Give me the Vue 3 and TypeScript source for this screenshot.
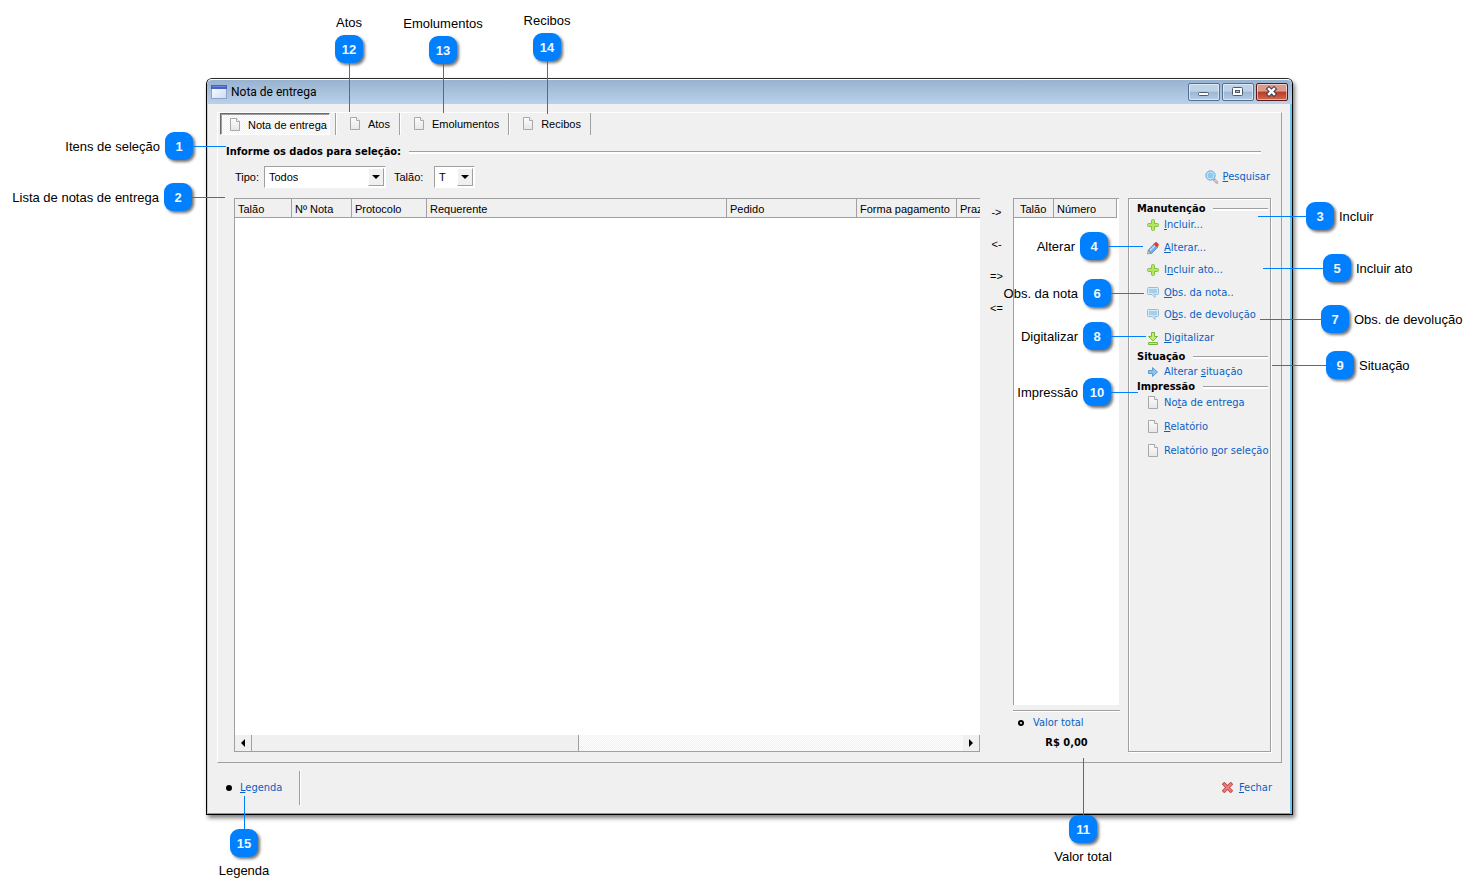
<script setup lang="ts">
import { computed, ref } from 'vue'

type Side = 'left' | 'right' | 'top' | 'bottom'

interface Callout {
  n: number
  label: string
  side: Side
  fromRight?: boolean
  x: number
  y: number
  reach: number
}

interface Action {
  icon: string
  pre: string
  key: string
  post: string
}

const tabs = ['Nota de entrega', 'Atos', 'Emolumentos', 'Recibos']
const activeTab = ref(0)

const tipo = ref('Todos')
const talao = ref('T')

const noteColumns = [
  { title: 'Talão', width: 57 },
  { title: 'Nº Nota', width: 60 },
  { title: 'Protocolo', width: 75 },
  { title: 'Requerente', width: 300 },
  { title: 'Pedido', width: 130 },
  { title: 'Forma pagamento', width: 100 },
  { title: 'Praz', width: 90 },
]

const moves = [
  { glyph: '->', title: 'Adicionar' },
  { glyph: '<-', title: 'Remover' },
  { glyph: '=>', title: 'Adicionar todos' },
  { glyph: '<=', title: 'Remover todos' },
]

const act = (icon: string, text: string): Action => {
  const i = text.indexOf('&')
  return { icon, pre: text.slice(0, i), key: text.slice(i + 1, i + 2), post: text.slice(i + 2) }
}

const groups = [
  {
    title: 'Manutenção',
    name: 'maintenance',
    actions: [
      act('plus', '&Incluir...'),
      act('pencil', '&Alterar...'),
      act('plus', 'I&ncluir ato...'),
      act('balloon', '&Obs. da nota..'),
      act('balloon', 'O&bs. de devolução'),
      act('download', '&Digitalizar'),
    ],
  },
  { title: 'Situação', name: 'status', actions: [act('arrow', 'Alterar &situação')] },
  {
    title: 'Impressão',
    name: 'print',
    actions: [act('page', 'No&ta de entrega'), act('page', '&Relatório'), act('page', 'Relatório &por seleção')],
  },
]

/* x and y are the tip of the leader line; x is measured from the right edge when fromRight is set */
const callouts: Callout[] = [
  { n: 1, label: 'Itens de seleção', side: 'left', x: 226, y: 146, reach: 33 },
  { n: 2, label: 'Lista de notas de entrega', side: 'left', x: 225, y: 197, reach: 33 },
  { n: 3, label: 'Incluir', side: 'right', fromRight: true, x: 219, y: 216, reach: 48 },
  { n: 4, label: 'Alterar', side: 'left', fromRight: true, x: 334, y: 246, reach: 35 },
  { n: 5, label: 'Incluir ato', side: 'right', fromRight: true, x: 214, y: 268, reach: 60 },
  { n: 6, label: 'Obs. da nota', side: 'left', fromRight: true, x: 333, y: 293, reach: 33 },
  { n: 7, label: 'Obs. de devolução', side: 'right', fromRight: true, x: 217, y: 319, reach: 61 },
  { n: 8, label: 'Digitalizar', side: 'left', fromRight: true, x: 331, y: 336, reach: 35 },
  { n: 9, label: 'Situação', side: 'right', fromRight: true, x: 205, y: 365, reach: 54 },
  { n: 10, label: 'Impressão', side: 'left', fromRight: true, x: 339, y: 392, reach: 27 },
  { n: 11, label: 'Valor total', side: 'bottom', fromRight: true, x: 394, y: 136, reach: 57 },
  { n: 12, label: 'Atos', side: 'top', x: 349, y: 112, reach: 49 },
  { n: 13, label: 'Emolumentos', side: 'top', x: 443, y: 113, reach: 49 },
  { n: 14, label: 'Recibos', side: 'top', x: 547, y: 114, reach: 53 },
  { n: 15, label: 'Legenda', side: 'bottom', x: 244, y: 98, reach: 33 },
]

const placed = computed(() =>
  callouts.map((c) => ({
    ...c,
    at: {
      [c.fromRight ? 'right' : 'left']: `${c.x}px`,
      [c.side === 'bottom' ? 'bottom' : 'top']: `${c.y}px`,
    },
    line: c.side === 'top' || c.side === 'bottom' ? { height: `${c.reach}px` } : { width: `${c.reach}px` },
  })),
)
</script>

<template>
  <div class="stage">
    <svg class="defs" aria-hidden="true">
      <defs>
        <linearGradient id="g-page" x1="0" y1="0" x2="0" y2="1">
          <stop offset="0" stop-color="#fdfdfd" />
          <stop offset="1" stop-color="#e6e6e6" />
        </linearGradient>
        <linearGradient id="g-app" x1="0" y1="0" x2="1" y2="1">
          <stop offset="0" stop-color="#ffffff" />
          <stop offset="1" stop-color="#cdd9f5" />
        </linearGradient>
        <symbol id="i-page" viewBox="0 0 12 14">
          <path d="M1.500 .5h6l3 3v9h-9z" fill="url(#g-page)" stroke="#a8a8a8" />
          <path d="M7.500 .5v3h3" fill="#fff" stroke="#a8a8a8" />
        </symbol>
        <symbol id="i-plus" viewBox="0 0 12 14">
          <path d="M4.500 2.500q0-1 1-1h1q1 0 1 1v3h3q1 0 1 1v1q0 1-1 1h-3v3q0 1-1 1h-1q-1 0-1-1v-3h-3q-1 0-1-1v-1q0-1 1-1h3z" fill="#b4e65f" stroke="#86bf45" />
        </symbol>
        <symbol id="i-pencil" viewBox="0 0 12 14">
          <path d="M1 9.500l6-6.500 3.500 3.500-6 6z" fill="#6fb0e6" stroke="#4b7fb5" stroke-width=".8" />
          <path d="M3 9.500l5-5" stroke="#c3e2f8" stroke-width="1.200" />
          <path d="M6.800 3l1.700-1.500q.7-.5 1.400.1l1.300 1.300q.6.700.1 1.400L10.200 6.200z" fill="#e23b3b" stroke="#c94040" stroke-width=".6" />
          <path d="M.5 13l.6-3.400 2.900 2.800z" fill="#d8cfc4" stroke="#777" stroke-width=".6" />
        </symbol>
        <symbol id="i-balloon" viewBox="0 0 12 14">
          <path d="M1.500 1.500h9q1 0 1 1v5q0 1-1 1h-2.500v3l-3-3h-3.500q-1 0-1-1v-5q0-1 1-1z" fill="#d3eaf7" stroke="#93bfdc" />
          <path d="M2 3h8v4h-2.500v2l-2-2h-3.500z" fill="#a4d0ec" />
        </symbol>
        <symbol id="i-download" viewBox="0 0 12 14">
          <path d="M4.500 1.500h3v4h3l-4.500 4.500-4.500-4.500h3z" fill="#c3ee76" stroke="#79b63a" />
          <path d="M1.500 11.500h9v2h-9z" fill="#c3ee76" stroke="#79b63a" />
        </symbol>
        <symbol id="i-arrow" viewBox="0 0 12 14">
          <path d="M1.500 5.500h4v-3l5 4.500-5 4.500v-3h-4z" fill="#8cc6ee" stroke="#5a9bd0" />
        </symbol>
        <symbol id="i-search" viewBox="0 0 14 14">
          <path d="M9 9.500l3 3" stroke="#a9a9a9" stroke-width="2.600" stroke-linecap="round" />
          <path d="M9.500 10l2.600 2.600" stroke="#eee" stroke-width="1" />
          <circle cx="5.500" cy="5.500" r="4.700" fill="#8ec9f0" stroke="#7aaed6" />
          <circle cx="5.500" cy="5.500" r="3.500" fill="none" stroke="#c9e7fa" />
        </symbol>
        <symbol id="i-close" viewBox="0 0 12 12">
          <path d="M2.500 2.500l7 7M9.500 2.500l-7 7" stroke="#b94a4a" stroke-width="4" stroke-linecap="square" />
          <path d="M2.500 2.500l7 7M9.500 2.500l-7 7" stroke="#f08080" stroke-width="2" stroke-linecap="square" />
        </symbol>
      </defs>
    </svg>

    <main class="window">
      <header class="titlebar">
        <svg class="app-icon" viewBox="0 0 16 14" aria-hidden="true">
          <rect x=".5" y=".5" width="15" height="13" fill="url(#g-app)" stroke="#8fa0c8" />
          <rect width="16" height="4" fill="#4561c4" />
          <rect x="1" y="1" width="14" height="1" fill="#6c87dc" />
        </svg>
        <h1>Nota de entrega</h1>
        <div class="caption-buttons">
          <button type="button" aria-label="Minimizar">
            <svg viewBox="0 0 14 12"><rect x="1.500" y="6.500" width="10" height="3" rx="1" fill="#fff" stroke="#4c5b70" /></svg>
          </button>
          <button type="button" aria-label="Maximizar">
            <svg viewBox="0 0 14 12">
              <rect x="1.500" y="1.500" width="10" height="8" rx="1" fill="#fff" stroke="#4c5b70" />
              <rect x="4.500" y="4.500" width="4" height="2" fill="#a9c3df" stroke="#4c5b70" />
            </svg>
          </button>
          <button type="button" class="close" aria-label="Fechar janela">
            <svg viewBox="0 0 14 12">
              <path d="M4 3l5 5M9 3l-5 5" stroke="#4a4350" stroke-width="4.600" stroke-linecap="square" />
              <path d="M4 3l5 5M9 3l-5 5" stroke="#fff" stroke-width="2.400" stroke-linecap="square" />
            </svg>
          </button>
        </div>
      </header>

      <section class="page">
        <div class="tabs" role="tablist">
          <button
            v-for="(t, i) in tabs"
            :key="t"
            type="button"
            role="tab"
            class="tab"
            :class="{ active: i === activeTab }"
            :aria-selected="i === activeTab"
            @click="activeTab = i"
          >
            <svg class="icon"><use href="#i-page" /></svg>
            <span>{{ t }}</span>
          </button>
        </div>

        <h2 class="rule-heading main-heading">Informe os dados para seleção:</h2>

        <form class="filters" @submit.prevent>
          <label for="tipo">Tipo:</label>
          <span class="combo wide">
            <select id="tipo" v-model="tipo"><option>Todos</option></select>
            <i class="drop" aria-hidden="true"></i>
          </span>
          <label for="talao" class="second">Talão:</label>
          <span class="combo narrow">
            <select id="talao" v-model="talao"><option>T</option></select>
            <i class="drop" aria-hidden="true"></i>
          </span>
          <a class="link search" href="#"><svg class="icon-search"><use href="#i-search" /></svg><span><u>P</u>esquisar</span></a>
        </form>

        <div class="columns">
          <div class="notes">
            <div class="table-view">
              <table class="notes-table">
                <colgroup>
                  <col v-for="c in noteColumns" :key="c.title" :style="{ width: c.width + 'px' }" />
                </colgroup>
                <thead>
                  <tr><th v-for="c in noteColumns" :key="c.title" scope="col">{{ c.title }}</th></tr>
                </thead>
              </table>
            </div>
            <div class="scrollbar">
              <button type="button" class="step" aria-label="Rolar para a esquerda"><svg viewBox="0 0 6 8"><path d="M5 0v8l-4-4z" /></svg></button>
              <div class="track"><div class="thumb"></div></div>
              <button type="button" class="step" aria-label="Rolar para a direita"><svg viewBox="0 0 6 8"><path d="M1 0v8l4-4z" /></svg></button>
            </div>
          </div>

          <div class="moves">
            <button v-for="m in moves" :key="m.glyph" type="button" :aria-label="m.title">{{ m.glyph }}</button>
          </div>

          <div class="chosen">
            <div class="chosen-list">
              <table class="chosen-table">
                <thead>
                  <tr><th scope="col" class="book">Talão</th><th scope="col">Número</th></tr>
                </thead>
              </table>
            </div>
            <div class="total">
              <a class="link" href="#"><i class="ring" aria-hidden="true"></i>Valor total</a>
              <strong>R$ 0,00</strong>
            </div>
          </div>

          <aside class="actions">
            <section v-for="g in groups" :key="g.name" :class="g.name">
              <h3 class="rule-heading">{{ g.title }}</h3>
              <ul>
                <li v-for="a in g.actions" :key="a.pre + a.key + a.post">
                  <a class="link" href="#"><svg class="icon"><use :href="'#i-' + a.icon" /></svg><span>{{ a.pre }}<u>{{ a.key }}</u>{{ a.post }}</span></a>
                </li>
              </ul>
            </section>
          </aside>
        </div>
      </section>

      <footer class="footer">
        <a class="link legend" href="#"><i class="dot" aria-hidden="true"></i><span><u>L</u>egenda</span></a>
        <a class="link quit" href="#"><svg class="icon-close"><use href="#i-close" /></svg><span><u>F</u>echar</span></a>
      </footer>
    </main>

    <div v-for="c in placed" :key="c.n" class="callout" :style="c.at">
      <div class="callout-body" :class="c.side">
        <span class="callout-label">{{ c.label }}</span>
        <b class="badge">{{ c.n }}</b>
        <i class="leader" :style="c.line"></i>
      </div>
    </div>
  </div>
</template>

<style>
body {
  margin: 0;
  background: #fff;
}
</style>

<style scoped>
* {
  box-sizing: border-box;
}
.stage {
  position: relative;
  display: flex;
  min-height: 100vh;
  padding: 78px 184px 79px 206px;
  font: 11px/14px 'DejaVu Sans Condensed', 'DejaVu Sans', sans-serif;
  color: #000;
}
.defs {
  position: absolute;
  width: 0;
  height: 0;
}
button {
  margin: 0;
  padding: 0;
  border: 0;
  background: none;
  font: inherit;
  color: inherit;
}
h1,
h2,
h3,
ul {
  margin: 0;
  padding: 0;
  list-style: none;
}
.window {
  flex: 1;
  display: flex;
  flex-direction: column;
  min-width: 0;
  border: 1px solid #000;
  border-top-color: #2b2b2b;
  border-radius: 6px 6px 0 0;
  background: #f0f0f0;
  box-shadow:
    inset 1px 0 #b4d2f5,
    inset -2px 0 #6cc5ea,
    inset 0 -1px #3fb6d8,
    2px 3px 4px rgba(0, 0, 0, 0.5);
}
.titlebar {
  display: flex;
  align-items: center;
  height: 25px;
  padding: 0 4px;
  border-top: 1px solid #fff;
  border-radius: 5px 5px 0 0;
  background: linear-gradient(#98b3d0, #b9d1ea);
}
.app-icon {
  width: 16px;
  height: 14px;
}
h1 {
  margin-left: 4px;
  font: 12px/16px Roboto, 'Noto Sans', sans-serif;
}
.caption-buttons {
  display: flex;
  gap: 2px;
  margin-left: auto;
}
.caption-buttons button {
  display: flex;
  align-items: center;
  justify-content: center;
  width: 32px;
  height: 18px;
  border: 1px solid #566f8e;
  border-radius: 2px;
  background: linear-gradient(#bfd3e8 45%, #9db7d3 50%, #b5cce4);
  box-shadow: inset 0 0 0 1px rgba(255, 255, 255, 0.5);
}
.caption-buttons .close {
  border-color: #5a1a1a;
  background: linear-gradient(#dc9a8c 45%, #b83b22 50%, #d2694f);
}
.caption-buttons svg {
  width: 14px;
  height: 12px;
}
.page {
  flex: 1;
  display: flex;
  flex-direction: column;
  margin: 8px 10px 0;
  border: 1px solid #a0a0a0;
  border-top-color: #fff;
  border-left-color: #fff;
}
.tabs {
  display: flex;
  height: 22px;
  padding-left: 2px;
  font-family: 'Liberation Sans', Arial, sans-serif;
}
.tab {
  display: flex;
  align-items: center;
  gap: 7px;
  padding: 0 9px 0 13px;
  border-left: 1px solid #a0a0a0;
  box-shadow: inset 1px 0 #fff;
}
.tab:last-child {
  border-right: 1px solid #a0a0a0;
}
.tab.active {
  margin-right: 5px;
  padding: 1px 2px 0 8px;
  border: 1px solid #fff;
  border-top-color: #696969;
  border-left-color: #696969;
  background: repeating-conic-gradient(#fff 0 25%, #f0f0f0 0 50%) 0 0 / 2px 2px;
  box-shadow: inset 1px 1px #a0a0a0;
}
.icon {
  flex: none;
  width: 12px;
  height: 14px;
}
.rule-heading {
  display: flex;
  align-items: center;
  font-size: 11px;
  line-height: 14px;
  font-weight: bold;
}
.rule-heading::after {
  content: '';
  flex: 1;
  height: 2px;
  margin-left: 8px;
  border-top: 1px solid #a0a0a0;
  background: #fff;
}
.main-heading {
  margin: 10px 20px 0 8px;
}
.filters {
  display: flex;
  align-items: center;
  height: 22px;
  margin: 7px 11px 0 17px;
  font-family: 'Liberation Sans', Arial, sans-serif;
}
.filters label {
  width: 29px;
}
.filters .second {
  width: 40px;
  margin-left: 8px;
}
.combo {
  position: relative;
  display: flex;
  height: 22px;
  border: 1px solid #fff;
  border-top-color: #a0a0a0;
  border-left-color: #a0a0a0;
  background: #fff;
}
.wide {
  width: 122px;
}
.narrow {
  width: 41px;
}
.combo select {
  flex: 1;
  width: 100%;
  padding: 0 0 0 4px;
  appearance: none;
  border: 0;
  background: none;
  font: inherit;
  color: inherit;
}
.drop {
  position: absolute;
  top: 1px;
  right: 1px;
  bottom: 1px;
  display: flex;
  align-items: center;
  justify-content: center;
  width: 16px;
  border: 1px solid #a0a0a0;
  border-top-color: #fff;
  border-left-color: #fff;
  background: #f0f0f0;
  pointer-events: none;
}
.drop::after {
  content: '';
  border: 4px solid transparent;
  border-top-color: #000;
  border-bottom: 0;
}
.link {
  display: flex;
  align-items: center;
  color: #0a5fc4;
  font-family: 'DejaVu Sans Condensed', 'DejaVu Sans', sans-serif;
  text-decoration: none;
  white-space: nowrap;
}
.search {
  gap: 4px;
  margin-left: auto;
}
.icon-search {
  width: 14px;
  height: 14px;
}
.columns {
  flex: 1;
  display: flex;
  margin: 10px 10px 10px 16px;
}
.notes {
  flex: 1;
  display: flex;
  flex-direction: column;
  min-width: 0;
  border: 1px solid #a0a0a0;
  border-right: 0;
  background: #fff;
}
.table-view {
  flex: 1;
  overflow: hidden;
}
table {
  table-layout: fixed;
  border-collapse: separate;
  border-spacing: 0;
  background: #f0f0f0;
  font-family: 'Liberation Sans', Arial, sans-serif;
}
.notes-table {
  width: 812px;
}
th {
  height: 19px;
  padding: 2px 0 0 3px;
  border-right: 1px solid #a0a0a0;
  border-bottom: 1px solid #a0a0a0;
  font-weight: normal;
  text-align: left;
  white-space: nowrap;
}
.scrollbar {
  display: flex;
  height: 16px;
}
.step {
  display: flex;
  align-items: center;
  justify-content: center;
  width: 17px;
  border-right: 1px solid #a0a0a0;
  background: #f0f0f0;
}
.step svg {
  width: 6px;
  height: 8px;
}
.track {
  flex: 1;
  background: repeating-conic-gradient(#fff 0 25%, #f0f0f0 0 50%) 0 0 / 2px 2px;
}
.thumb {
  width: 46%;
  height: 100%;
  border-right: 1px solid #a0a0a0;
  background: #f0f0f0;
}
.moves {
  display: flex;
  flex-direction: column;
  align-items: center;
  gap: 16px;
  width: 33px;
  padding-top: 6px;
  font-family: 'Liberation Sans', Arial, sans-serif;
}
.moves button {
  height: 16px;
}
.chosen {
  display: flex;
  flex-direction: column;
  width: 107px;
}
.chosen-list {
  flex: 1;
  margin-right: 1px;
  border-top: 1px solid #a0a0a0;
  border-left: 1px solid #a0a0a0;
  background: #fff;
}
.chosen-table {
  width: 103px;
}
.chosen-table .book {
  width: 40px;
  padding-left: 6px;
}
.total {
  display: flex;
  flex-direction: column;
  gap: 6px;
  height: 42px;
  margin-top: 5px;
  padding-top: 5px;
  border-top: 1px solid #a0a0a0;
  box-shadow: inset 0 1px #fff;
}
.total .link {
  gap: 9px;
  padding-left: 5px;
}
.total strong {
  text-align: center;
}
.ring {
  width: 6px;
  height: 6px;
  border: 2px solid #000;
  border-radius: 50%;
  background: #fff;
}
.actions {
  width: 143px;
  margin-left: 8px;
  padding: 3px 2px 0 8px;
  border: 1px solid #a0a0a0;
  box-shadow:
    inset 1px 1px #fff,
    1px 1px #fff;
}
.actions ul {
  display: flex;
  flex-direction: column;
  padding-left: 10px;
}
.actions li {
  height: 16px;
}
.actions .link {
  gap: 5px;
  height: 16px;
}
.maintenance ul {
  justify-content: space-between;
  height: 129px;
  margin: 1px 0 4px;
}
.print ul {
  gap: 8px;
  margin-top: 1px;
}
.footer {
  display: flex;
  align-items: center;
  justify-content: space-between;
  height: 51px;
  padding: 0 20px 2px 19px;
}
.legend {
  gap: 8px;
  height: 34px;
  padding-right: 17px;
  border-right: 1px solid #a0a0a0;
  box-shadow: 1px 0 #fff;
}
.dot {
  width: 6px;
  height: 6px;
  border-radius: 50%;
  background: #000;
}
.quit {
  gap: 6px;
}
.icon-close {
  width: 11px;
  height: 11px;
}
.callout {
  position: absolute;
  width: 0;
  height: 0;
}
.callout-body {
  position: absolute;
  display: flex;
  align-items: center;
}
.callout-body.left {
  top: -14px;
  right: 0;
}
.callout-body.right {
  top: -14px;
  left: 0;
  flex-direction: row-reverse;
}
.callout-body.top {
  bottom: 0;
  left: -60px;
  width: 120px;
  flex-direction: column;
}
.callout-body.bottom {
  top: 0;
  left: -60px;
  width: 120px;
  flex-direction: column-reverse;
}
.callout-label {
  margin: 0 5px;
  padding-top: 2px;
  font: 13px/16px 'Liberation Sans', Arial, sans-serif;
  white-space: nowrap;
}
.top .callout-label,
.bottom .callout-label {
  margin: 4px 0;
}
.badge {
  flex: none;
  width: 28px;
  height: 28px;
  padding-top: 1px;
  border-radius: 9px;
  background: #0080ff;
  box-shadow: 2px 2px 3px rgba(0, 0, 0, 0.55);
  color: #eef7ff;
  font: bold 13px/28px 'Liberation Sans', Arial, sans-serif;
  text-align: center;
}
.leader {
  flex: none;
  width: 1px;
  height: 1px;
  background: #0080ff;
}
</style>
